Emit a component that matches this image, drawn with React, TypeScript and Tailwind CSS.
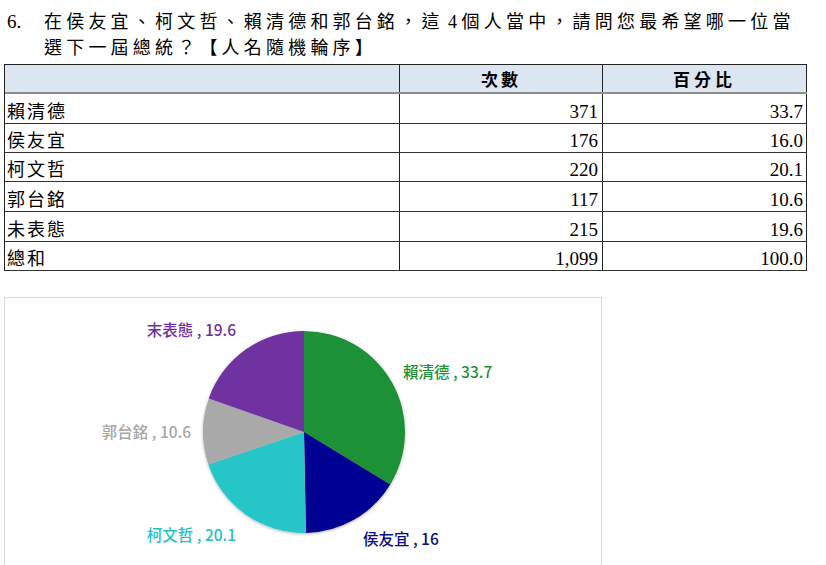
import React from "react";

const rows = [
  { name: "賴清德", count: "371", pct: "33.7", h: "h-[30px]" },
  { name: "侯友宜", count: "176", pct: "16.0", h: "h-[29px]" },
  { name: "柯文哲", count: "220", pct: "20.1", h: "h-[29px]" },
  { name: "郭台銘", count: "117", pct: "10.6", h: "h-[30px]" },
  { name: "未表態", count: "215", pct: "19.6", h: "h-[30px]" },
  { name: "總和", count: "1,099", pct: "100.0", h: "h-[29px]" },
];

const slices = [
  { value: 33.7, color: "#1e9134" },
  { value: 16.0, color: "#000093" },
  { value: 20.1, color: "#27c6c8" },
  { value: 10.6, color: "#a9a9a9" },
  { value: 19.6, color: "#7030a0" },
];

const labels = [
  { text: "賴清德 , 33.7", x: 398, y: 80, anchor: "start", color: "#1e9134" },
  { text: "侯友宜 , 16", x: 358, y: 247, anchor: "start", color: "#0b0b86" },
  { text: "柯文哲 , 20.1", x: 231, y: 243, anchor: "end", color: "#27c2c4" },
  { text: "郭台銘 , 10.6", x: 186, y: 140, anchor: "end", color: "#a6a6a6" },
  { text: "末表態 , 19.6", x: 231, y: 38, anchor: "end", color: "#7030a0" },
];

function PieChart() {
  const cx = 299;
  const cy = 134;
  const r = 101;
  let acc = 0;
  const pt = (p: number) => {
    const a = (p / 100) * Math.PI * 2;
    return [cx + r * Math.sin(a), cy - r * Math.cos(a)];
  };

  return (
    <svg width="596" height="290" className="block">
      <defs>
        <filter id="pieShadow" x="-20%" y="-20%" width="140%" height="140%">
          <feDropShadow dx="0" dy="1" stdDeviation="1.5" floodColor="#000" floodOpacity="0.3" />
        </filter>
      </defs>
      <g filter="url(#pieShadow)">
        {slices.map((s, i) => {
          const [x1, y1] = pt(acc);
          acc += s.value;
          const [x2, y2] = pt(acc);
          const large = s.value > 50 ? 1 : 0;
          return (
            <path
              key={i}
              d={`M${cx},${cy} L${x1},${y1} A${r},${r} 0 ${large} 1 ${x2},${y2} Z`}
              fill={s.color}
            />
          );
        })}
      </g>
      {labels.map((l) => (
        <text
          key={l.text}
          x={l.x}
          y={l.y}
          textAnchor={l.anchor as "start" | "end"}
          fill={l.color}
          fontSize="15.5"
          fontWeight="500"
          fontFamily='"Noto Sans CJK TC", "Noto Sans", sans-serif'
        >
          {l.text}
        </text>
      ))}
    </svg>
  );
}

export default function App() {
  return (
    <div className="w-[826px] h-[565px] overflow-hidden bg-white text-black font-['Liberation_Serif','Noto_Sans_CJK_TC',serif]">
      {/* Question */}
      <div className="flex pt-[9px] pl-[7px] text-[18px] leading-[26px]">
        <div className="w-[37px] shrink-0 text-[19px]">6.</div>
        <div className="tracking-[4.2px]">
          <div>在侯友宜、柯文哲、賴清德和郭台銘，這<span className="tracking-normal"> 4 </span>個人當中，請問您最希望哪一位當</div>
          <div>選下一屆總統？【人名隨機輪序】</div>
        </div>
      </div>

      {/* Table */}
      <div className="mt-[3px] ml-[4px] w-[803px] border-t border-l border-[#222]">
        <div className="grid grid-cols-[395px_203px_204px] h-[29px] bg-[#dce6f1] border-b-2 border-[#8c8c8c]">
          <div className="border-r border-[#222]" />
          <div className="border-r border-[#222] flex items-center justify-center text-[17px] font-bold tracking-[3px] font-['Noto_Sans_CJK_TC',sans-serif]">
            次數
          </div>
          <div className="border-r border-[#222] flex items-center justify-center text-[17px] font-bold tracking-[4px] font-['Noto_Sans_CJK_TC',sans-serif]">
            百分比
          </div>
        </div>
        {rows.map((r) => (
          <div key={r.name} className={`grid grid-cols-[395px_203px_204px] ${r.h} border-b border-[#333]`}>
            <div className="border-r border-[#222] flex items-end pl-[2px] pb-[1px] text-[18px] leading-[20px] tracking-[2px]">
              {r.name}
            </div>
            <div className="border-r border-[#222] flex items-end justify-end pr-[4px] pb-[1px] text-[19px] leading-[20px]">
              {r.count}
            </div>
            <div className="border-r border-[#222] flex items-end justify-end pr-[3px] pb-[1px] text-[19px] leading-[20px]">
              {r.pct}
            </div>
          </div>
        ))}
      </div>

      {/* Chart */}
      <div className="mt-[26px] ml-[4px] w-[598px] h-[292px] border border-[#d9d9d9] bg-white">
        <PieChart />
      </div>
    </div>
  );
}
